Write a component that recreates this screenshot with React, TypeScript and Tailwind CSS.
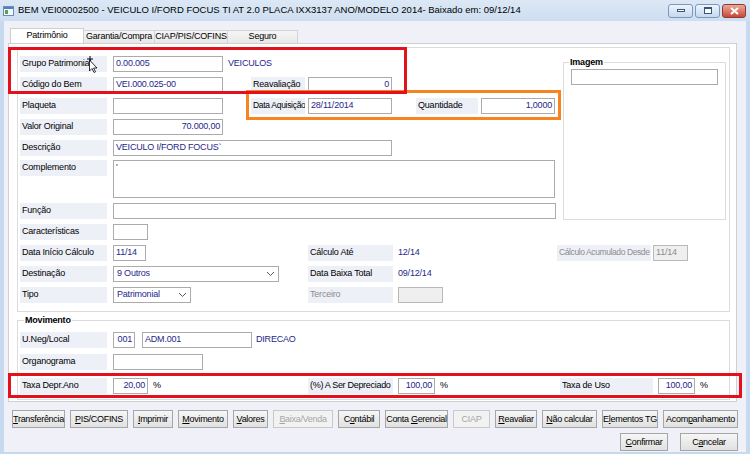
import React from "react";

const FONT = "font-['Liberation_Sans',Arial,sans-serif]";

type BtnDef = { pre: string; acc: string; post: string; w: string; disabled?: boolean };

const actions: BtnDef[] = [
  { pre: "", acc: "T", post: "ransferência", w: "w-[53px]" },
  { pre: "", acc: "P", post: "IS/COFINS", w: "w-[58px]" },
  { pre: "", acc: "I", post: "mprimir", w: "w-[40px]" },
  { pre: "", acc: "M", post: "ovimento", w: "w-[50px]" },
  { pre: "", acc: "V", post: "alores", w: "w-[35px]" },
  { pre: "", acc: "B", post: "aixa/Venda", w: "w-[60px]", disabled: true },
  { pre: "C", acc: "o", post: "ntábil", w: "w-[42px]" },
  { pre: "Conta ", acc: "G", post: "erencial", w: "w-[63px]" },
  { pre: "CIAP", acc: "", post: "", w: "w-[37px]", disabled: true },
  { pre: "", acc: "R", post: "eavaliar", w: "w-[42px]" },
  { pre: "", acc: "N", post: "ão calcular", w: "w-[55px]" },
  { pre: "E", acc: "l", post: "ementos TG", w: "w-[56px]" },
  { pre: "Acom", acc: "p", post: "anhamento", w: "w-[75px]" },
];

function Label({
  children,
  w = "w-[87px]",
  muted,
  className = "text-[9px]",
}: {
  children: React.ReactNode;
  w?: string;
  muted?: boolean;
  className?: string;
}) {
  return (
    <div
      className={`h-[16px] ${w} shrink-0 bg-[#eef0f8] pl-[2px] flex items-center whitespace-nowrap overflow-hidden ${
        muted ? "text-[#8c8c8c]" : "text-black"
      } ${className}`}
    >
      {children}
    </div>
  );
}

function Field({
  w,
  value = "",
  right,
  disabled,
  className = "",
}: {
  w: string;
  value?: string;
  right?: boolean;
  disabled?: boolean;
  className?: string;
}) {
  return (
    <div
      className={`h-[16px] ${w} shrink-0 border flex items-center px-[2px] text-[9px] whitespace-nowrap overflow-hidden ${
        disabled ? "bg-[#efefef] border-[#b9b9b9] text-[#8c8c8c]" : "bg-white border-[#ababab] text-[#26278a]"
      } ${right ? "justify-end" : ""} ${className}`}
    >
      {value}
    </div>
  );
}

function Chevron() {
  return (
    <svg width="9" height="6" viewBox="0 0 9 6" className="shrink-0">
      <polyline points="1,1 4.5,4.5 8,1" fill="none" stroke="#555" strokeWidth="1" />
    </svg>
  );
}

function Select({ w, value, className = "" }: { w: string; value: string; className?: string }) {
  return (
    <div
      className={`h-[16px] ${w} shrink-0 border border-[#ababab] bg-white flex items-center justify-between pl-[3px] pr-[3px] text-[9px] text-[#26278a] ${className}`}
    >
      <span>{value}</span>
      <Chevron />
    </div>
  );
}

function Row({ children, className = "h-[21px]" }: { children: React.ReactNode; className?: string }) {
  return <div className={`flex items-center ${className}`}>{children}</div>;
}

function Value({ children, className = "" }: { children: React.ReactNode; className?: string }) {
  return <span className={`text-[9px] text-[#26278a] whitespace-nowrap ${className}`}>{children}</span>;
}

function WinButton({ pre, acc, post, w, disabled }: BtnDef) {
  return (
    <button
      className={`h-[18px] ${w} shrink-0 border text-[9px] tracking-[-0.3px] leading-none flex items-center justify-center whitespace-pre ${
        disabled
          ? "border-[#c9c9c9] bg-[#f2f2f2] text-[#a6a6a6]"
          : "border-[#a6a6a6] bg-gradient-to-b from-[#f6f6f6] to-[#e1e1e1] text-black"
      }`}
    >
      <span>
        {pre}
        {acc && <span className="underline">{acc}</span>}
        {post}
      </span>
    </button>
  );
}

function TitleBar() {
  return (
    <div className="h-[21px] flex items-center bg-gradient-to-b from-[#dce8f5] to-[#cddef1]">
      <svg width="11" height="10" viewBox="0 0 11 10" className="ml-[3px] shrink-0">
        <rect x="0.5" y="0.5" width="10" height="9" fill="#f4f7fb" stroke="#6d8db5" />
        <rect x="1" y="1" width="9" height="2" fill="#4f7fc0" />
        <rect x="2" y="4" width="3" height="4" fill="#5aa346" />
      </svg>
      <span className="ml-[4px] text-[9.5px] tracking-normal text-black whitespace-nowrap">
        BEM VEI00002500 - VEICULO I/FORD FOCUS TI AT 2.0 PLACA IXX3137 ANO/MODELO 2014- Baixado em: 09/12/14
      </span>
      <div className="ml-auto mr-[4px] flex items-center gap-[2px]">
        <div className="w-[25px] h-[14px] rounded-[3px] border border-[#7b97bd] bg-gradient-to-b from-[#eef4fb] to-[#c7d8ee] flex items-center justify-center">
          <div className="w-[8px] h-[3px] border border-[#38557c] bg-white" />
        </div>
        <div className="w-[25px] h-[14px] rounded-[3px] border border-[#7b97bd] bg-gradient-to-b from-[#eef4fb] to-[#c7d8ee] flex items-center justify-center">
          <div className="w-[8px] h-[7px] border border-[#38557c] border-t-2 bg-white" />
        </div>
        <div className="w-[24px] h-[14px] rounded-[3px] border border-[#8d3a32] bg-gradient-to-b from-[#e9a99a] to-[#c8473a] flex items-center justify-center">
          <svg width="9" height="8" viewBox="0 0 9 8">
            <path d="M1 1 L8 7 M8 1 L1 7" stroke="#fff" strokeWidth="2" />
          </svg>
        </div>
      </div>
    </div>
  );
}

const tabIdle =
  "h-[13px] bg-gradient-to-b from-[#f5f5f5] to-[#e8e8e8] border border-b-0 border-l-0 border-[#d4d4d4] flex items-center justify-center text-[9px] text-black whitespace-nowrap";

function Tabs() {
  return (
    <div className="flex items-end h-[15px] pl-[6px]">
      <div className="h-[15px] w-[74px] bg-white border border-b-0 border-[#cfcfcf] flex items-center justify-center text-[9px] text-black">
        Patrimônio
      </div>
      <div className={`w-[71px] ${tabIdle}`}>Garantia/Compra</div>
      <div className={`w-[73px] ${tabIdle}`}>CIAP/PIS/COFINS</div>
      <div className={`w-[70px] ${tabIdle}`}>Seguro</div>
    </div>
  );
}

function Patrimonio() {
  return (
    <div className="ml-[8px] mt-[3px] w-[713px] border border-[#dcdcdc] pt-[5px] pb-[6px] pl-[2px]">
      <div className="flex">
        <div className="w-[538px] shrink-0">
          <Row>
            <Label>Grupo Patrimonial</Label>
            <Field w="w-[110px]" value="0.00.005" className="ml-[6px]" />
            <Value className="ml-[5px]">VEICULOS</Value>
          </Row>
          <Row>
            <Label>Código do Bem</Label>
            <Field w="w-[110px]" value="VEI.000.025-00" className="ml-[6px]" />
            <Label w="w-[54px]" className="ml-[28px] text-[9px]">
              Reavaliação
            </Label>
            <Field w="w-[84px]" value="0" right className="ml-[3px]" />
          </Row>
          <Row>
            <Label>Plaqueta</Label>
            <Field w="w-[110px]" className="ml-[6px]" />
            <Label w="w-[54px]" className="ml-[28px] text-[8.5px] tracking-[-0.3px]">
              Data Aquisição
            </Label>
            <Field w="w-[84px]" value="28/11/2014" className="ml-[3px]" />
            <Label w="w-[62px]" className="ml-[24px] text-[9px]">
              Quantidade
            </Label>
            <Field w="w-[74px]" value="1,0000" right className="ml-[3px]" />
          </Row>
          <Row>
            <Label>Valor Original</Label>
            <Field w="w-[110px]" value="70.000,00" right className="ml-[6px]" />
          </Row>
          <Row>
            <Label>Descrição</Label>
            <Field w="w-[279px]" value="VEICULO I/FORD FOCUS`" className="ml-[6px]" />
          </Row>
          <Row className="h-[42px] items-start pt-[2px]">
            <Label>Complemento</Label>
            <div className="ml-[6px] w-[442px] h-[38px] border border-[#ababab] bg-white px-[2px] text-[9px] leading-[12px] text-[#26278a]">
              '
            </div>
          </Row>
          <Row>
            <Label>Função</Label>
            <Field w="w-[443px]" className="ml-[6px]" />
          </Row>
        </div>
        <div className="ml-[5px] mt-[9px] w-[163px] h-[158px] border border-[#dcdcdc] flex flex-col">
          <div className="-mt-[7px] ml-[5px] self-start bg-white px-[1px] h-[12px] leading-[12px] text-[9px] font-bold text-black">
            Imagem
          </div>
          <div className="ml-[7px] mt-[1px] w-[147px] h-[16px] border border-[#ababab] bg-white" />
        </div>
      </div>
      <Row>
        <Label>Características</Label>
        <Field w="w-[35px]" className="ml-[6px]" />
      </Row>
      <Row>
        <Label>Data Início Cálculo</Label>
        <Field w="w-[33px]" value="11/14" className="ml-[6px]" />
        <Label w="w-[85px]" className="ml-[162px] text-[9px]">
          Cálculo Até
        </Label>
        <Value className="ml-[5px] w-[159px]">12/14</Value>
        <Label w="w-[94px]" muted className="text-[8.5px] tracking-[-0.4px]">
          Cálculo Acumulado Desde
        </Label>
        <Field w="w-[35px]" value="11/14" disabled className="ml-[2px]" />
      </Row>
      <Row>
        <Label>Destinação</Label>
        <Select w="w-[166px]" value="9 Outros" className="ml-[6px]" />
        <Label w="w-[85px]" className="ml-[29px] text-[9px]">
          Data Baixa Total
        </Label>
        <Value className="ml-[5px]">09/12/14</Value>
      </Row>
      <Row>
        <Label>Tipo</Label>
        <Select w="w-[78px]" value="Patrimonial" className="ml-[6px]" />
        <Label w="w-[85px]" muted className="ml-[117px] text-[9px]">
          Terceiro
        </Label>
        <Field w="w-[45px]" disabled className="ml-[5px]" />
      </Row>
    </div>
  );
}

function Movimento() {
  return (
    <div className="ml-[8px] mt-[8px] w-[713px] h-[80px] border border-[#dcdcdc] pl-[2px] flex flex-col">
      <div className="-mt-[7px] ml-[4px] self-start bg-white px-[1px] h-[12px] leading-[12px] text-[9px] font-bold text-black">
        Movimento
      </div>
      <Row className="h-[22px] mt-[3px]">
        <Label>U.Neg/Local</Label>
        <Field w="w-[22px]" value="001" right className="ml-[6px]" />
        <Field w="w-[110px]" value="ADM.001" className="ml-[7px]" />
        <Value className="ml-[4px]">DIRECAO</Value>
      </Row>
      <Row className="h-[22px]">
        <Label>Organograma</Label>
        <Field w="w-[90px]" className="ml-[6px]" />
      </Row>
      <Row className="h-[22px] mt-[2px]">
        <Label>Taxa Depr.Ano</Label>
        <Field w="w-[35px]" value="20,00" right className="ml-[6px]" />
        <span className="w-[160px] pl-[5px] text-[9px] text-black">%</span>
        <Label w="w-[85px]" className="text-[9px] tracking-[-0.3px]">
          (%) A Ser Depreciado
        </Label>
        <Field w="w-[37px]" value="100,00" right className="ml-[5px]" />
        <span className="w-[125px] pl-[5px] text-[9px] text-black">%</span>
        <Label w="w-[93px]">Taxa de Uso</Label>
        <Field w="w-[37px]" value="100,00" right className="ml-[5px]" />
        <span className="pl-[5px] text-[9px] text-black">%</span>
      </Row>
    </div>
  );
}

export default function App() {
  return (
    <div className={`relative w-[750px] h-[454px] overflow-hidden bg-[#c6d9ee] tracking-[-0.2px] ${FONT}`}>
      <TitleBar />
      <div className="mx-[4px] h-[431px] bg-[#f0f1f8] flex flex-col">
        <div className="pt-[7px]">
          <Tabs />
        </div>
        <div className="ml-[4px] w-[729px] h-[359px] bg-white border border-[#d0d0d0]">
          <Patrimonio />
          <Movimento />
        </div>
        <div className="mt-[8px] pl-[8px] flex gap-[5px]">
          {actions.map((a) => (
            <WinButton key={a.pre + a.acc + a.post} {...a} />
          ))}
        </div>
        <div className="mt-[5px] pr-[8px] flex justify-end gap-[12px]">
          <WinButton pre="" acc="C" post="onfirmar" w="w-[48px]" />
          <WinButton pre="C" acc="a" post="ncelar" w="w-[58px]" />
        </div>
      </div>

      {/* mouse cursor over the label */}
      <svg className="absolute left-[86px] top-[56px]" width="12" height="17" viewBox="0 0 12 17">
        <path d="M4 0 L4 6 M1 3 L7 3" stroke="#000" strokeWidth="1" />
        <path d="M3.5 4 L3.5 15 L6 12.5 L8 16.5 L9.5 15.8 L7.6 12 L11 12 Z" fill="#fff" stroke="#000" strokeWidth="0.8" />
      </svg>

      {/* annotation frames */}
      <div className="absolute left-[246px] top-[90px] w-[315px] h-[30px] border-[3px] border-[#f7841f]" />
      <div className="absolute left-[8px] top-[47px] w-[399px] h-[47px] border-[3px] border-[#e3111b]" />
      <div className="absolute left-[8px] top-[373px] w-[734px] h-[25px] border-[3px] border-[#e3111b]" />
    </div>
  );
}
